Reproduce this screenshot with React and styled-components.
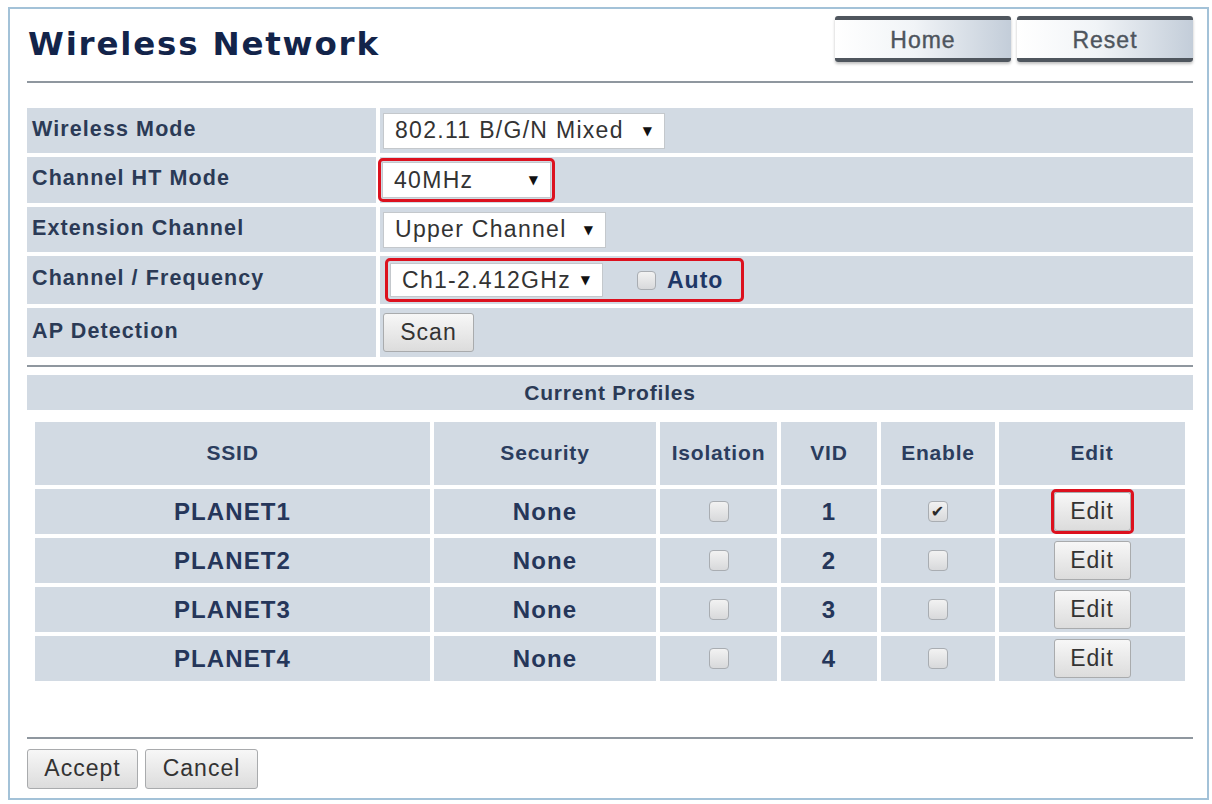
import React from 'react';
import styled, { createGlobalStyle } from 'styled-components';

const Global = createGlobalStyle`
  html, body { margin: 0; padding: 0; background: #ffffff; }
  body { font-family: "Liberation Sans", Arial, sans-serif; }
  * { box-sizing: border-box; }
`;

const ROW_BG = '#d2dae3';
const LABEL = '#2b3a56';

const Frame = styled.div`
  width: 1201px;
  height: 793px;
  margin: 7px 0 0 8px;
  border: 2px solid #a3c2d8;
  padding: 0 14px 0 17px;
  display: flex;
  flex-direction: column;
`;

const Header = styled.header`
  height: 72px;
  display: flex;
  justify-content: space-between;
  align-items: flex-start;
`;

const Title = styled.h1`
  margin: 19px 0 0 1px;
  font-family: "DejaVu Sans", Verdana, sans-serif;
  font-weight: bold;
  font-size: 32.5px;
  line-height: 32px;
  letter-spacing: 1.8px;
  color: #13244a;
`;

const NavGroup = styled.div`
  display: flex;
  gap: 6px;
  margin-top: 7px;
`;

const NavButton = styled.button`
  width: 176px;
  height: 46px;
  border: none;
  border-top: 4px solid #4f565e;
  border-bottom: 4px solid #4f565e;
  border-radius: 3px;
  background: linear-gradient(to right, #ffffff 0%, #f1f4f7 45%, #c3cdd9 100%);
  box-shadow: 0 2px 3px rgba(0, 0, 0, 0.25);
  font-family: "Liberation Sans", Arial, sans-serif;
  font-size: 23px;
  letter-spacing: 1px;
  color: #4e555d;
  -webkit-text-stroke: 0.4px #4e555d;
  padding: 3px 0 0;
  cursor: pointer;
`;

const Rule = styled.div`
  height: 2px;
  background: #8f979f;
  margin-top: ${p => p.$mt || 0}px;
  flex: none;
`;

const FormGrid = styled.div`
  margin-top: 25px;
  display: grid;
  grid-template-columns: 349px 1fr;
  grid-template-rows: 45px 46px 45px 48px 49px;
  gap: 4px;
`;

const LabelCell = styled.div`
  background: ${ROW_BG};
  display: flex;
  align-items: center;
  padding: 0 0 3px 5px;
  font-weight: bold;
  font-size: 21.5px;
  letter-spacing: 1.1px;
  color: ${LABEL};
`;

const ValueCell = styled.div`
  background: ${ROW_BG};
  display: flex;
  align-items: center;
  padding-left: ${p => (p.$pl !== undefined ? p.$pl : 3)}px;
`;

const SelectBox = styled.div`
  width: ${p => p.$w}px;
  height: ${p => p.$h || 36}px;
  background: #ffffff;
  border: 1px solid #c4c8cc;
  display: flex;
  align-items: center;
  justify-content: space-between;
  padding: 0 12px 0 11px;
  font-size: 23px;
  letter-spacing: 1.3px;
  color: #333;
`;

const Arrow = styled.span`
  font-size: 12px;
  color: #111;
  letter-spacing: 0;
  font-family: "DejaVu Sans", sans-serif;
`;

const Highlight = styled.div`
  display: inline-flex;
  align-items: center;
  border: 3px solid #dc111e;
  border-radius: 5px;
  padding: ${p => p.$pad || 0}px;
  margin-left: ${p => p.$ml || 0}px;
`;

const AutoLabel = styled.label`
  display: inline-flex;
  align-items: center;
  gap: 11px;
  margin: 0 16px 0 34px;
  font-weight: bold;
  font-size: 23px;
  letter-spacing: 1px;
  color: #1e3766;
`;

const GrayButton = styled.button`
  width: ${p => p.$w}px;
  height: ${p => p.$h || 39}px;
  background: linear-gradient(#f7f7f7, #dcdcdc);
  border: 1px solid #a9abad;
  border-radius: 3px;
  font-family: "Liberation Sans", Arial, sans-serif;
  font-size: 23px;
  letter-spacing: 1px;
  color: #333;
  padding: 0 0 1px;
  cursor: pointer;
`;

const Check = styled.span`
  display: inline-flex;
  align-items: center;
  justify-content: center;
  width: ${p => p.$s || 20}px;
  height: ${p => p.$s || 21}px;
  border: 1px solid #a9adb2;
  border-radius: 4px;
  background: linear-gradient(#f2f2f2, #d8d9db);
  font-size: 16px;
  color: #2a2a2a;
  font-family: "DejaVu Sans", sans-serif;
  line-height: 1;
`;

const SectionBar = styled.div`
  margin-top: 8px;
  height: 35px;
  background: ${ROW_BG};
  display: flex;
  align-items: center;
  justify-content: center;
  font-weight: bold;
  font-size: 21px;
  letter-spacing: 0.8px;
  color: ${LABEL};
`;

const ProfileTable = styled.div`
  margin: 12px 8px 0;
  display: grid;
  grid-template-columns: 395px 222px 117px 96px 114px 186px;
  grid-template-rows: 63px repeat(4, 45px);
  gap: 4px;
`;

const Cell = styled.div`
  background: ${ROW_BG};
  display: flex;
  align-items: center;
  justify-content: center;
  font-weight: bold;
  font-size: ${p => (p.$head ? 21 : 24)}px;
  letter-spacing: ${p => (p.$head ? 0.8 : 1.1)}px;
  color: ${p => (p.$head ? '#2b3d5e' : '#25365a')};
  padding-bottom: ${p => (p.$head ? 2 : 0)}px;
`;

const Footer = styled.div`
  display: flex;
  gap: 7px;
  margin-top: 10px;
`;

const profiles = [
  { ssid: 'PLANET1', vid: 1, enabled: true, highlight: true },
  { ssid: 'PLANET2', vid: 2 },
  { ssid: 'PLANET3', vid: 3 },
  { ssid: 'PLANET4', vid: 4 },
];

export default function App() {
  return (
    <>
      <Global />
      <Frame>
        <Header>
          <Title>Wireless Network</Title>
          <NavGroup>
            <NavButton>Home</NavButton>
            <NavButton>Reset</NavButton>
          </NavGroup>
        </Header>
        <Rule />

        <FormGrid>
          <LabelCell>Wireless Mode</LabelCell>
          <ValueCell>
            <SelectBox $w={282}>802.11 B/G/N Mixed<Arrow>▼</Arrow></SelectBox>
          </ValueCell>

          <LabelCell>Channel HT Mode</LabelCell>
          <ValueCell $pl={0}>
            <Highlight $ml={-2} $pad={1}>
              <SelectBox $w={169}>40MHz<Arrow>▼</Arrow></SelectBox>
            </Highlight>
          </ValueCell>

          <LabelCell>Extension Channel</LabelCell>
          <ValueCell>
            <SelectBox $w={223}>Upper Channel<Arrow>▼</Arrow></SelectBox>
          </ValueCell>

          <LabelCell>Channel / Frequency</LabelCell>
          <ValueCell $pl={5}>
            <Highlight $pad={2}>
              <SelectBox $w={213} $h={34}>Ch1-2.412GHz<Arrow>▼</Arrow></SelectBox>
              <AutoLabel><Check $s={19} />Auto</AutoLabel>
            </Highlight>
          </ValueCell>

          <LabelCell>AP Detection</LabelCell>
          <ValueCell>
            <GrayButton $w={91}>Scan</GrayButton>
          </ValueCell>
        </FormGrid>

        <Rule $mt={8} />
        <SectionBar>Current Profiles</SectionBar>

        <ProfileTable>
          <Cell $head>SSID</Cell>
          <Cell $head>Security</Cell>
          <Cell $head>Isolation</Cell>
          <Cell $head>VID</Cell>
          <Cell $head>Enable</Cell>
          <Cell $head>Edit</Cell>
          {profiles.map(p => (
            <React.Fragment key={p.ssid}>
              <Cell>{p.ssid}</Cell>
              <Cell>None</Cell>
              <Cell><Check /></Cell>
              <Cell>{p.vid}</Cell>
              <Cell><Check>{p.enabled ? '✔' : ''}</Check></Cell>
              <Cell>
                {p.highlight ? (
                  <Highlight>
                    <GrayButton $w={77} $h={39}>Edit</GrayButton>
                  </Highlight>
                ) : (
                  <GrayButton $w={77} $h={39}>Edit</GrayButton>
                )}
              </Cell>
            </React.Fragment>
          ))}
        </ProfileTable>

        <Rule $mt={56} />
        <Footer>
          <GrayButton $w={111} $h={40}>Accept</GrayButton>
          <GrayButton $w={113} $h={40}>Cancel</GrayButton>
        </Footer>
      </Frame>
    </>
  );
}
